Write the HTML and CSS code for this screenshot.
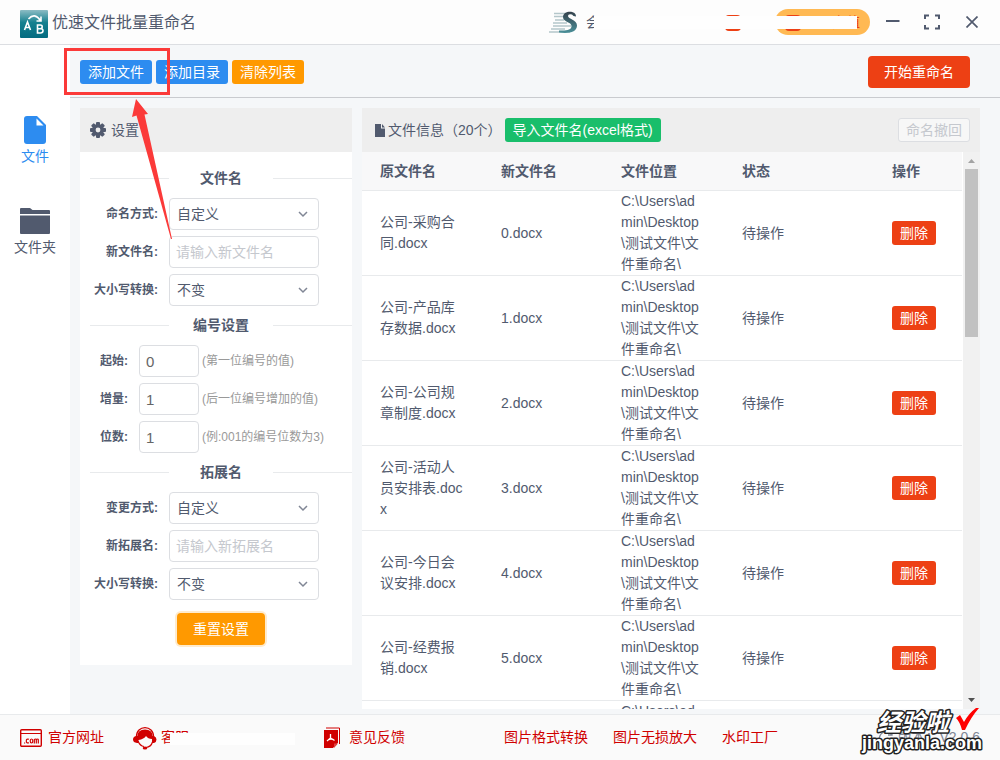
FILE: index.html
```html
<!DOCTYPE html>
<html lang="zh-CN">
<head>
<meta charset="utf-8">
<title>优速文件批量重命名</title>
<link rel="stylesheet" href="styles.css">
</head>
<body>
<div class="app">
  <header class="header">
    <svg class="app-logo" width="28" height="28" viewBox="0 0 28 28" aria-hidden="true">
      <defs><linearGradient id="lg" x1="0" y1="0" x2="0" y2="1"><stop offset="0" stop-color="#8cbcc4"/><stop offset=".45" stop-color="#14808f"/><stop offset="1" stop-color="#036b80"/></linearGradient></defs>
      <rect width="28" height="28" rx="1" fill="url(#lg)"/>
      <g fill="none" stroke="#fff" stroke-width="1.6"><path d="M4.500 20 7.500 12 10.500 20M5.500 17.500h4"/><path d="M17.500 15v8h3q2.500 0 2.500-2.200t-2.500-2h-3 2.500q2.200 0 2.200-2t-2.200-1.800z"/><path d="M8.500 9q6-7 12 1.500M16.500 11h4.500V6.500"/></g>
    </svg>
    <h1 class="title">优速文件批量重命名</h1>
    <div class="actions">
      <svg width="28" height="22" viewBox="0 0 28 22" aria-hidden="true">
        <defs><linearGradient id="sg" x1="0" y1="0" x2="0" y2="1"><stop offset="0" stop-color="#34414c"/><stop offset="1" stop-color="#4a9099"/></linearGradient></defs>
        <path d="M5 2.500h14M5 5.500h10M6 9h9M4 12h14M4 15h18M2 18h14M0 21h21" stroke="#b4c6ca" stroke-width="1.500"/>
        <path d="M27 5.500C27.500-1 14-1 14 6c0 5 8.500 5 8.500 9 0 4-5 5-12.500 4.500v2C20 23 28 21 28 14.500 28 8.500 19 8 19 5q0-2.500 4-1.500 1 2 4 2z" fill="url(#sg)"/>
      </svg>
      <button class="member">会</button>
      <span class="badge-icon"></span>
      <button class="pill"><span class="badge-icon"></span><span>充值</span></button>
      <span class="blank blank-top"></span>
      <button class="win win-min" aria-label="最小化"><svg width="14" height="16" viewBox="0 0 14 16"><path d="M0 7h13.500" stroke="#515a6e" stroke-width="2"/></svg></button>
      <button class="win win-full" aria-label="全屏"><svg width="16" height="16" viewBox="0 0 16 16"><path d="M1 5V1.500h4M11 1.500h4V5M15 11v3.500h-4M5 14.500H1V11" fill="none" stroke="#515a6e" stroke-width="2"/></svg></button>
      <button class="win win-close" aria-label="关闭"><svg width="12" height="12" viewBox="0 0 12 12"><path d="M.5.5l11 11M11.500.5l-11 11" stroke="#515a6e" stroke-width="1.700"/></svg></button>
    </div>
  </header>

  <div class="body">
    <nav class="sidebar">
      <a class="nav active" href="#file"><svg width="22" height="28" viewBox="0 0 22 28"><path d="M3 0h10l9 9v16q0 3-3 3H3q-3 0-3-3V3q0-3 3-3z" fill="#2d8cf0"/><path d="M12.500 2.500v7h7z" fill="#fff"/></svg><span>文件</span></a>
      <a class="nav" href="#folder"><svg width="30" height="28" viewBox="0 0 30 28"><path d="M0 2q0-1 1-1h9l2.500 2H29q1 0 1 1v3H0zM0 8.500h30V26q0 1-1 1H1q-1 0-1-1z" fill="#515a6e"/></svg><span>文件夹</span></a>
    </nav>

    <main class="main">
      <div class="toolbar">
        <button class="btn blue">添加文件</button>
        <button class="btn blue">添加目录</button>
        <button class="btn orange">清除列表</button>
        <button class="btn red start">开始重命名</button>
        <span class="mark-box"></span>
        <svg class="mark-arrow" width="48" height="142" viewBox="0 0 48 142" aria-hidden="true"><path d="M8 0 20 15 16.500 15.500 44 140 43 140 8.500 16.500 4 18z" fill="#fb3a39"/></svg>
      </div>

      <div class="content">
        <section class="panel settings">
          <div class="panel-head">
            <svg width="16" height="16" viewBox="0 0 16 16" aria-hidden="true"><g fill="#515a6e"><circle cx="8" cy="8" r="6"/><g id="t"><rect x="6" y="0" width="4" height="16" rx="1"/><rect x="0" y="6" width="16" height="4" rx="1"/></g><use href="#t" transform="rotate(45 8 8)"/></g><circle cx="8" cy="8" r="2.400" fill="#eee"/></svg>
            <h2 class="settings-title">设置</h2>
          </div>
          <form class="form">
            <h3 class="divider">文件名</h3>
            <div class="rows">
              <div class="row"><label for="a1">命名方式:</label><span class="select"><select id="a1"><option>自定义</option></select><svg width="10" height="7" viewBox="0 0 10 7"><path d="M1 1l4 4 4-4" fill="none" stroke="#808695" stroke-width="1.500"/></svg></span></div>
              <div class="row"><label for="a2">新文件名:</label><input id="a2" class="text" type="text" placeholder="请输入新文件名"></div>
              <div class="row"><label for="a3">大小写转换:</label><span class="select"><select id="a3"><option>不变</option></select><svg width="10" height="7" viewBox="0 0 10 7"><path d="M1 1l4 4 4-4" fill="none" stroke="#808695" stroke-width="1.500"/></svg></span></div>
            </div>
            <h3 class="divider">编号设置</h3>
            <div class="rows short">
              <div class="row"><label for="b1">起始:</label><input id="b1" class="text num" type="text" value="0"><span class="note">(第一位编号的值)</span></div>
              <div class="row"><label for="b2">增量:</label><input id="b2" class="text num" type="text" value="1"><span class="note">(后一位编号增加的值)</span></div>
              <div class="row"><label for="b3">位数:</label><input id="b3" class="text num" type="text" value="1"><span class="note">(例:001的编号位数为3)</span></div>
            </div>
            <h3 class="divider">拓展名</h3>
            <div class="rows">
              <div class="row"><label for="c1">变更方式:</label><span class="select"><select id="c1"><option>自定义</option></select><svg width="10" height="7" viewBox="0 0 10 7"><path d="M1 1l4 4 4-4" fill="none" stroke="#808695" stroke-width="1.500"/></svg></span></div>
              <div class="row"><label for="c2">新拓展名:</label><input id="c2" class="text" type="text" placeholder="请输入新拓展名"></div>
              <div class="row"><label for="c3">大小写转换:</label><span class="select"><select id="c3"><option>不变</option></select><svg width="10" height="7" viewBox="0 0 10 7"><path d="M1 1l4 4 4-4" fill="none" stroke="#808695" stroke-width="1.500"/></svg></span></div>
            </div>
            <button type="button" class="btn orange reset">重置设置</button>
          </form>
        </section>

        <section class="panel files">
          <div class="panel-head">
            <svg width="10" height="13" viewBox="0 0 10 13" aria-hidden="true"><path d="M0 0h6v4.500h4V13H0zM7 0l3 3.500H7z" fill="#515a6e"/></svg>
            <h2 class="files-title">文件信息（20个）</h2>
            <button class="btn green">导入文件名(excel格式)</button>
            <button class="btn undo" disabled>命名撤回</button>
          </div>
          <div class="scroll">
            <div class="viewport">
              <table>
                <colgroup><col class="c1"><col class="c2"><col class="c3"><col class="c4"><col></colgroup>
                <thead><tr><th>原文件名</th><th>新文件名</th><th>文件位置</th><th>状态</th><th>操作</th></tr></thead>
                <tbody>
                  <tr><td>公司-采购合同.docx</td><td>0.docx</td><td>C:\Users\admin\Desktop\测试文件\文件重命名\</td><td>待操作</td><td><button class="btn red del">删除</button></td></tr>
                  <tr><td>公司-产品库存数据.docx</td><td>1.docx</td><td>C:\Users\admin\Desktop\测试文件\文件重命名\</td><td>待操作</td><td><button class="btn red del">删除</button></td></tr>
                  <tr><td>公司-公司规章制度.docx</td><td>2.docx</td><td>C:\Users\admin\Desktop\测试文件\文件重命名\</td><td>待操作</td><td><button class="btn red del">删除</button></td></tr>
                  <tr><td>公司-活动人员安排表.docx</td><td>3.docx</td><td>C:\Users\admin\Desktop\测试文件\文件重命名\</td><td>待操作</td><td><button class="btn red del">删除</button></td></tr>
                  <tr><td>公司-今日会议安排.docx</td><td>4.docx</td><td>C:\Users\admin\Desktop\测试文件\文件重命名\</td><td>待操作</td><td><button class="btn red del">删除</button></td></tr>
                  <tr><td>公司-经费报销.docx</td><td>5.docx</td><td>C:\Users\admin\Desktop\测试文件\文件重命名\</td><td>待操作</td><td><button class="btn red del">删除</button></td></tr>
                  <tr><td></td><td></td><td>C:\Users\admin\Desktop\测试文件\文件重命名\</td><td></td><td></td></tr>
                </tbody>
              </table>
            </div>
            <div class="scrollbar" aria-hidden="true">
              <svg width="7" height="4" viewBox="0 0 7 4"><path d="M0 4 3.500 0 7 4z" fill="#a3a3a3"/></svg>
              <span class="thumb"></span>
              <svg width="7" height="4" viewBox="0 0 7 4"><path d="M0 0 3.500 4 7 0z" fill="#505050"/></svg>
            </div>
          </div>
        </section>
      </div>
    </main>
  </div>

  <footer class="footer">
    <a class="link site" href="#site"><svg width="22" height="18" viewBox="0 0 22 18"><rect x=".7" y=".7" width="20.600" height="16.600" rx="1" fill="none" stroke="#d00000" stroke-width="1.400"/><path d="M1 4.500h20" stroke="#d00000"/><g fill="none" stroke="#d00000" stroke-width="1.200"><path d="M4 14h1.200M9 10.300Q6.300 9.300 6.300 12T9 13.700M14.300 14.500V10.500q1.500-1 2 0v4M16.300 10.500q1.800-1 2 0v4"/><ellipse cx="11.500" cy="12" rx="1.300" ry="2"/></g></svg><span>官方网址</span></a>
    <a class="link service" href="#service"><svg width="24" height="24" viewBox="0 0 24 24"><path d="M3.500 11C3-1.500 21-1.500 20.500 11" fill="none" stroke="#d00000" stroke-width="1.300"/><path d="M4.500 10Q4.500 3.500 12 3.500t7.500 6.500H21q2.500 1 2.500 3.500T21 17h-2v-4q-4 0-6-3-2 3-7.500 4v3H4q-4-.5-4-3.500T3 10z" fill="#d00000"/><path d="M5 15q2 5 6 5.500M19.500 16q-1.500 5-6.500 5.500" fill="none" stroke="#d00000" stroke-width="1.200"/><ellipse cx="12" cy="22" rx="2.300" ry="1.500" fill="#d00000"/></svg><span>客服</span><span class="blank blank-foot"></span></a>
    <a class="link feedback" href="#feedback"><svg width="18" height="22" viewBox="0 0 18 22"><path d="M3 1h13.500v16" fill="none" stroke="#d00000"/><path d="M1 3h14v12.500l-5 5.500H1z" fill="#d00000"/><path d="M7.500 7v4L4 14M7.500 11l4 2.500M5 13q3-2 6 0" fill="none" stroke="#fff" stroke-width="1.300"/><path d="M11 21v-4.500h4z" fill="#e04040"/></svg><span>意见反馈</span></a>
    <a class="link" href="#convert">图片格式转换</a>
    <a class="link" href="#enlarge">图片无损放大</a>
    <a class="link" href="#watermark">水印工厂</a>
    <span class="version"><svg width="16" height="16" viewBox="0 0 16 16" aria-hidden="true"><path d="M13.500 4.500A6.500 6.500 0 1 0 14.500 9M14 1v4h-4" fill="none" stroke="#808695" stroke-width="1.300"/></svg><span>版本：V2.0.6</span></span>
    <svg class="brand" width="130" height="52" viewBox="0 0 130 52">
      <g fill="#fff" stroke="#222" stroke-width="3" stroke-linejoin="round" paint-order="stroke" font-weight="bold">
        <text x="19" y="23" font-size="24" font-style="italic" class="brand-cn">经验啦</text>
        <text x="4" y="41" font-size="18" class="brand-en">jingyanla.com</text>
      </g>
      <path d="M98 10 102 7 106 14Q111 5 118 0H121Q113 9 107 22H104Q102 14 98 10z" fill="#f00"/>
    </svg>
  </footer>
</div>
</body>
</html>
```
FILE: styles.css
```css
* { box-sizing: border-box; }
body {
  margin: 0;
  font-family: "Liberation Sans", "Noto Sans CJK SC", sans-serif;
  font-size: 14px;
  line-height: 21px;
  color: #515a6e;
}
button, input, select { font: inherit; color: inherit; }
button { border: 0; padding: 0; background: none; }
h1, h2, h3 { margin: 0; font-weight: normal; font-size: 14px; }
a { color: inherit; text-decoration: none; }
svg { display: block; flex: none; }

.app { display: flex; flex-direction: column; height: 100vh; }

.header {
  display: flex;
  align-items: center;
  gap: 4px;
  height: 45px;
  padding: 0 22px 0 20px;
  background: #fdfdfd;
  border-bottom: 1px solid #dcdee2;
}
.app-logo { margin-top: 4px; }
.header .title { font-size: 16px; white-space: nowrap; }
.actions { position: relative; display: flex; align-items: center; margin-left: auto; height: 44px; }
.member { width: 139px; margin-left: 9px; text-align: left; }
.badge-icon { flex: none; width: 16px; height: 16px; border-radius: 4px; background: #ed4014; margin: 2px 34px 0 0; }
.pill {
  display: flex;
  align-items: center;
  justify-content: space-between;
  width: 95px;
  height: 26px;
  padding: 0 10px;
  border-radius: 13px;
  background: #ffb953;
  color: #ed4014;
}
.pill .badge-icon { margin: 2px 0 0; }
.blank { position: absolute; background: #fefefe; }
.blank-top { left: 45px; top: 16px; width: 263px; height: 13px; }
.win { margin-left: 26px; }
.win-min { margin-left: 16px; }
.win-full { margin-left: 24px; }

.body { display: flex; flex: 1; min-height: 0; }
.sidebar {
  display: flex;
  flex-direction: column;
  gap: 40px;
  width: 70px;
  padding-top: 71px;
  background: #fff;
}
.nav { display: flex; flex-direction: column; align-items: center; gap: 2px; }
.nav.active { color: #2d8cf0; }

.main { display: flex; flex-direction: column; flex: 1; min-width: 0; background: #f5f7f9; }
.toolbar {
  position: relative;
  display: flex;
  align-items: center;
  gap: 4px;
  height: 53px;
  padding: 1px 30px 0 10px;
  border-bottom: 1px solid #c9cbcf;
}
.btn {
  height: 24px;
  padding: 0 8px;
  border-radius: 3px;
  color: #fff;
  line-height: 22px;
  white-space: nowrap;
}
.blue { background: #2d8cf0; }
.orange { background: #ff9900; }
.red { background: #ed4014; }
.green { background: #19be6b; }
.start { height: 32px; padding: 0 16px; margin-left: auto; border-radius: 4px; }
.mark-box { position: absolute; left: -6px; top: 3px; width: 106px; height: 47px; border: 3px solid #fb3a39; }
.mark-arrow { position: absolute; left: 58px; top: 54px; z-index: 2; }

.content { display: flex; align-items: flex-start; gap: 10px; flex: 1; min-height: 0; padding: 10px 20px 5px 10px; }
.panel { background: #fff; }
.panel-head { display: flex; align-items: center; height: 44px; background: #eee; }
.settings { flex: none; width: 272px; }
.settings .panel-head { padding-left: 10px; gap: 5px; }
.form { padding: 15px 0 20px 10px; }
.divider {
  display: grid;
  grid-template-columns: 79px 1fr 79px;
  align-items: center;
  height: 22px;
  font-weight: bold;
  text-align: center;
}
.divider::before, .divider::after { content: ""; height: 1px; background: #e8eaec; }
.rows { display: flex; flex-direction: column; gap: 6px; margin: 9px 0 8px; }
.row { display: flex; align-items: center; height: 32px; }
.row label { width: 68px; margin-right: 11px; text-align: right; font-size: 12px; font-weight: bold; white-space: nowrap; }
.row .text, .row select { flex: none; }
.short label { width: 38px; }
.text, .select select {
  width: 150px;
  height: 32px;
  padding: 0 7px;
  border: 1px solid #dcdee2;
  border-radius: 4px;
  background: #fff;
}
.text { padding: 0 6px; }
.text::placeholder { color: #c5c8ce; opacity: 1; }
.num { width: 60px; color: #666; font-size: 15px; }
.note { margin-left: 3px; font-size: 12px; color: #999; white-space: nowrap; }
.select { position: relative; }
.select select { display: block; appearance: none; }
.select svg { position: absolute; right: 11px; top: 13px; pointer-events: none; }
.reset { display: block; height: 32px; margin: 13px 0 0 87px; padding: 0 16px; border-radius: 4px; box-shadow: 0 0 0 2px #ffebcc; }

.files { display: flex; flex-direction: column; align-self: stretch; flex: 1; min-width: 0; }
.files .panel-head { flex: none; padding: 0 10px 0 13px; gap: 3px; }
.files-title { white-space: nowrap; }
.undo { margin-left: auto; padding: 0 7px; border: 1px solid #dcdee2; background: #f7f7f7; color: #c5c8ce; }
.scroll { display: flex; flex: 1; min-height: 0; }
.viewport { flex: 1; overflow: hidden; }
.scrollbar {
  display: flex;
  flex-direction: column;
  align-items: center;
  width: 17px;
  margin-left: 1px;
  padding: 7px 2px 7px 1px;
  background: #f1f1f1;
}
.thumb { width: 13px; height: 168px; margin: 6px 0 auto; background: #c1c1c1; }
table { width: 100%; table-layout: fixed; border-collapse: separate; border-spacing: 0; }
.c1, .c3 { width: 121px; }
.c2 { width: 120px; }
.c4 { width: 150px; }
th, td { padding: 0 18px; border-bottom: 1px solid #e8eaec; text-align: left; word-break: break-all; }
th { height: 39px; background: #f8f8f9; }
td { height: 85px; }
td:nth-child(4), th:nth-child(4) { padding-right: 0; }
.del { display: block; }

.footer {
  position: relative;
  display: flex;
  align-items: center;
  gap: 25px;
  height: 46px;
  padding: 0 20px;
  border-top: 1px solid #e8eaec;
  background: #fafafa;
  color: #d00000;
}
.link { position: relative; display: flex; align-items: center; gap: 6px; white-space: nowrap; }
.service { width: 166px; gap: 4px; margin-left: 4px; }
.feedback { width: 156px; gap: 8px; margin-left: -1px; }
.blank-foot { left: 37px; top: 7px; width: 125px; height: 12px; }
.version { display: flex; align-items: center; gap: 4px; margin-left: auto; color: #808695; white-space: nowrap; }
.brand { position: absolute; right: 12px; bottom: 0; }
.brand-cn { font-family: "Noto Sans CJK SC", sans-serif; }
.brand-en { font-family: "Liberation Sans", sans-serif; }
```
